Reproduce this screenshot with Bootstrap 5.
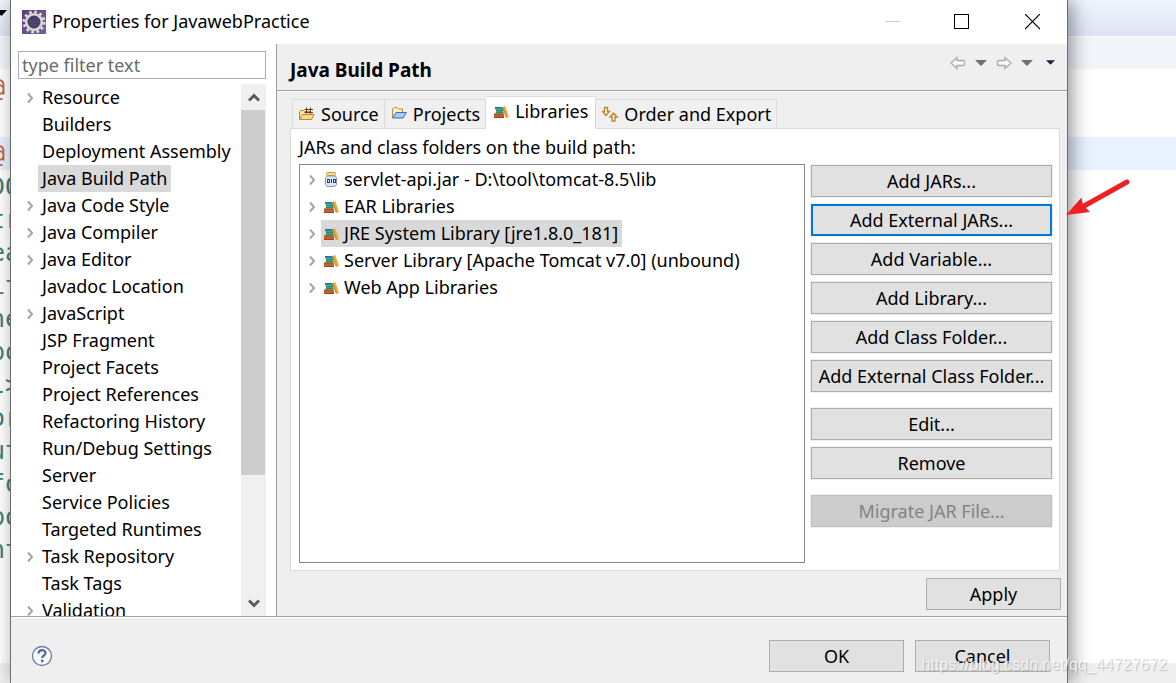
<!DOCTYPE html>
<html lang="en">
<head>
<meta charset="utf-8">
<meta name="viewport" content="width=device-width, initial-scale=1">
<title>Properties for JavawebPractice</title>
<link href="https://cdn.jsdelivr.net/npm/bootstrap@5.3.0/dist/css/bootstrap.min.css" rel="stylesheet">
<style>
  body { font-family: "Noto Sans", "Open Sans", sans-serif; font-size: 18px; line-height: 27px; color: #000; background: #fff; }
  button { font: inherit; color: inherit; }
  svg { display: block; flex: none; }
  .desktop { height: 100vh; grid-template: minmax(0, 1fr) / minmax(0, 1fr); }
  .desktop > * { grid-area: 1 / 1; }

  /* editor behind the dialog */
  .ide-toolbar { height: 36px; background: linear-gradient(#f1f4fd, #dde3f4); }
  .ide-tabs { height: 32px; margin-top: 1px; background: #f4f5fb; }
  .code { padding-top: 2px; font: 25px/33px "DejaVu Sans Mono", monospace; color: #3f8080; white-space: pre; }
  .code div { height: 33px; text-indent: -10px; }
  .code .attr { color: #c8603c; }
  .code .current { background: #e8f1fe; }
  .ide-status { height: 20px; background: #efefef; }

  /* dialog frame */
  .dialog { margin: 0 108px 0 10px; background: #efefef; border: solid #6d6d6d; border-width: 0 1px; box-shadow: 4px 0 18px rgba(0, 0, 0, .42); }
  .titlebar { height: 44px; padding-left: 11px; background: #fff; }
  .titlebar span { padding: 0 0 2px 6px; }
  .win-btn { width: 70px; height: 44px; border: 0; background: none; padding: 0; }

  /* category side */
  .side { width: 266px; background: #fff; border-right: 1px solid #a0a0a0; padding: 7px 10px 0 7px; }
  .filter { height: 28px; border: 1px solid #abadb3; border-radius: 0; padding: 0 3px; font-size: 18px; color: #000; }
  .filter::placeholder { color: #6a6a6a; opacity: 1; }
  .tree { margin-top: 5px; }
  .tree ul { min-width: 0; }
  .tree-row { height: 27px; white-space: nowrap; }
  .twisty { width: 6px; height: 12px; margin: 1px 5px 0 9px; visibility: hidden; }
  .twisty.open-able { visibility: visible; }
  .tree-label { padding: 0 4px; }
  .picked { background: #d9d9d9; }
  .scroll { width: 25px; background: #f0f0f0; }
  .scroll button { height: 26px; border: 0; padding: 0; background: none; }
  .thumb { flex: 0 0 76%; width: 24px; background: #cdcdcd; }

  /* page side */
  .page-head { height: 47px; padding: 0 12px 0 13px; border-bottom: 1px solid #a0a0a0; box-shadow: 0 1px #fff; }
  .page-head h1 { font-size: 19px; line-height: 27px; padding-top: 6px; }
  .tool { border: 0; background: none; padding: 0; }
  .page-tools { gap: 9px; padding-bottom: 9px; }
  .page-body { padding: 5px 6px 6px 13px; }
  .tabs { padding-left: 2px; height: 32px; }
  .tab-btn { height: 29px; border: 1px solid #dcdcdc; border-width: 1px 1px 0 0; background: #f0f0f0; padding: 0 5px 0 6px; gap: 6px; white-space: nowrap; }
  .tab-btn:first-child { border-left-width: 1px; }
  .tab-btn.active { height: 33px; margin-bottom: -1px; padding: 0 7px 3px; background: #fff; position: relative; }
  .pane { border: 1px solid #dcdcdc; background: #fff; padding: 5px 7px 7px 8px; margin-right: 1px; }
  .pane-split { gap: 6px; margin-top: 3px; }
  .lib-list { border: 1px solid #828790; padding-top: 1px; }
  .lib-list .twisty { margin-right: 6px; }
  .lib-label { padding: 0 4px 0 2px; gap: 5px; height: 27px; }
  .actions { width: 241px; gap: 7px; padding-top: 1px; }

  .push { height: 32px; padding: 0; font-size: 18px; line-height: 28px; color: #000; background: #e1e1e1; border: 1px solid #adadad; border-radius: 0; white-space: nowrap; box-shadow: 0 0 0 1px #f0f0f0; }
  .push.focused { border: 2px solid #0078d7; }
  .push:disabled { opacity: 1; color: #838383; background: #ccc; border-color: #bfbfbf; }
  .gap-above { margin-top: 9px; }
  .wide { width: 135px; }
  .apply-row { padding-top: 7px; }
  .footer-bar { height: 67px; border-top: 1px solid #a0a0a0; box-shadow: inset 0 1px #fff; padding: 11px 17px 0 20px; gap: 11px; }

  /* overlays */
  .pointer { right: 46px; top: 178px; }
  .watermark { right: 9px; bottom: 6px; font: 16px/24px "Liberation Sans", sans-serif; color: rgba(255, 255, 255, .75); text-shadow: 1px 1px 1px rgba(0, 0, 0, .22); }
</style>
</head>
<body>
<svg width="0" height="0" class="position-absolute" aria-hidden="true">
  <symbol id="i-chev" viewBox="0 0 6 12"><path d="M1 1.500L5 6L1 10.500" fill="none" stroke="#a6a6a6" stroke-width="2"/></symbol>
  <symbol id="i-books" viewBox="0 0 16 16">
    <path d="M2 3h7l1 1v1.500H2z" fill="#2b8fc0"/><path d="M2 3.500h6.500" stroke="#1c6f9e"/>
    <path d="M3 6h7.500v3H3z" fill="#46a67a"/><path d="M3 6h7.500M2.500 9h8" stroke="#17784e"/>
    <path d="M1 10h10v3.500H1z" fill="#c4622f"/><path d="M1 10h9.500M1 13.500h10" stroke="#98461d"/>
    <path d="M9.500 3l2.700-1L16 13l-2.800.8z" fill="#f0a63a"/><path d="M9.800 3L13.300 13.500" stroke="#c77f1d" fill="none"/>
  </symbol>
  <symbol id="i-jar" viewBox="0 0 16 16">
    <rect x="3.500" y=".5" width="9" height="3" rx="1" fill="#f6dd8a" stroke="#c8973a"/>
    <path d="M4 4h8l1.500 2v6.500L12 14.500H4l-1.500-2V6z" fill="#dce8f8" stroke="#8197b8"/>
    <rect x="4.500" y="7.500" width="2" height="3" fill="none" stroke="#27406e"/><path d="M8.500 7v4" stroke="#27406e"/><rect x="10.500" y="7.500" width="2" height="3" fill="none" stroke="#27406e"/>
  </symbol>
  <symbol id="i-source" viewBox="0 0 16 16">
    <path d="M.5 13.500V5.500l1-1h3l1 1h6v8z" fill="#f9e3ac" stroke="#bd8433"/>
    <path d="M.5 13.500l3-5h11.500l-2.500 5z" fill="#fbd88a" stroke="#bd8433"/>
    <path d="M5.500 3.500H14M5.500 6.500H14M7.500 1.500v6M11.500 1.500v6" stroke="#6b3a22" fill="none"/>
  </symbol>
  <symbol id="i-project" viewBox="0 0 16 16">
    <path d="M1.500 11.500V3L3 1.500h3L7.500 3h4v4" fill="#faefc4" stroke="#b8913f"/>
    <path d="M1.500 12l3.500-5.500h10.500L12 12z" fill="#a9cdf2" stroke="#3d6cb0"/>
  </symbol>
  <symbol id="i-order" viewBox="0 0 16 16">
    <path d="M2.500 1.500h3v4h2L4 9.500.5 5.500h2z" fill="#fdf0c2" stroke="#b8862f" stroke-width="1.300"/>
    <path d="M10 15h3v-4h2.200L11.500 7 8 11h2z" fill="#fdf0c2" stroke="#b8862f" stroke-width="1.300"/>
  </symbol>
  <symbol id="i-down" viewBox="0 0 12 6"><path d="M0 0h12L6 6z"/></symbol>
</svg>

<div class="desktop d-grid position-relative overflow-hidden">
  <div class="d-flex flex-column overflow-hidden" aria-hidden="true">
    <div class="ide-toolbar"><svg width="8" height="20" viewBox="0 0 8 20"><path d="M-4 10H7L1.500 16z"/></svg></div>
    <div class="ide-tabs"></div>
    <div class="code flex-grow-1 overflow-hidden"><div class="attr">@</div><div></div><div class="attr current">@</div><div>DOC</div><div>tr</div><div>ea</div><div>it</div><div>ne</div><div>po</div><div>l&gt;</div><div>or</div><div>ut</div><div>fo</div><div>po</div><div>nt</div></div>
    <div class="ide-status"></div>
  </div>

  <main class="dialog d-flex flex-column position-relative">
    <header class="titlebar d-flex align-items-center">
      <svg width="24" height="24" viewBox="0 0 24 24" aria-hidden="true">
        <defs><linearGradient id="purple" x2="1" y2="1"><stop stop-color="#5b3f7e"/><stop offset="1" stop-color="#7460a4"/></linearGradient></defs>
        <rect width="24" height="24" fill="url(#purple)"/>
        <circle cx="12" cy="12" r="10" fill="none" stroke="#dedcd6" stroke-width="3" stroke-dasharray="2.600 2.636"/>
        <circle cx="12" cy="12" r="7.800" fill="#453c66" stroke="#dad8d2" stroke-width="2.600"/>
        <path d="M7 10h10M6.500 12.500h11M7 15h10" stroke="#57507c"/>
      </svg>
      <span class="flex-grow-1">Properties for JavawebPractice</span>
      <button class="win-btn d-flex align-items-center justify-content-center" aria-label="Minimize" disabled><svg width="15" height="15"><path d="M0 6.500h15" stroke="#ccc"/></svg></button>
      <button class="win-btn d-flex align-items-center justify-content-center" aria-label="Maximize"><svg width="16" height="16"><rect x=".5" y=".5" width="14" height="14" fill="none" stroke="#000"/></svg></button>
      <button class="win-btn d-flex align-items-center justify-content-center" aria-label="Close"><svg width="15" height="16"><path d="M0 0l15 15M15 0L0 15" stroke="#000" stroke-width="1.200"/></svg></button>
    </header>

    <div class="d-flex flex-grow-1 overflow-hidden">
      <nav class="side d-flex flex-column flex-shrink-0" aria-label="Categories">
        <input class="filter w-100 flex-shrink-0" type="text" placeholder="type filter text" aria-label="Filter">
        <div class="tree d-flex flex-grow-1 overflow-hidden">
          <ul class="list-unstyled mb-0 flex-grow-1">
            <li class="tree-row d-flex align-items-center"><svg class="twisty open-able"><use href="#i-chev"/></svg><span class="tree-label">Resource</span></li>
            <li class="tree-row d-flex align-items-center"><svg class="twisty"></svg><span class="tree-label">Builders</span></li>
            <li class="tree-row d-flex align-items-center"><svg class="twisty"></svg><span class="tree-label">Deployment Assembly</span></li>
            <li class="tree-row d-flex align-items-center"><svg class="twisty"></svg><span class="tree-label picked">Java Build Path</span></li>
            <li class="tree-row d-flex align-items-center"><svg class="twisty open-able"><use href="#i-chev"/></svg><span class="tree-label">Java Code Style</span></li>
            <li class="tree-row d-flex align-items-center"><svg class="twisty open-able"><use href="#i-chev"/></svg><span class="tree-label">Java Compiler</span></li>
            <li class="tree-row d-flex align-items-center"><svg class="twisty open-able"><use href="#i-chev"/></svg><span class="tree-label">Java Editor</span></li>
            <li class="tree-row d-flex align-items-center"><svg class="twisty"></svg><span class="tree-label">Javadoc Location</span></li>
            <li class="tree-row d-flex align-items-center"><svg class="twisty open-able"><use href="#i-chev"/></svg><span class="tree-label">JavaScript</span></li>
            <li class="tree-row d-flex align-items-center"><svg class="twisty"></svg><span class="tree-label">JSP Fragment</span></li>
            <li class="tree-row d-flex align-items-center"><svg class="twisty"></svg><span class="tree-label">Project Facets</span></li>
            <li class="tree-row d-flex align-items-center"><svg class="twisty"></svg><span class="tree-label">Project References</span></li>
            <li class="tree-row d-flex align-items-center"><svg class="twisty"></svg><span class="tree-label">Refactoring History</span></li>
            <li class="tree-row d-flex align-items-center"><svg class="twisty"></svg><span class="tree-label">Run/Debug Settings</span></li>
            <li class="tree-row d-flex align-items-center"><svg class="twisty"></svg><span class="tree-label">Server</span></li>
            <li class="tree-row d-flex align-items-center"><svg class="twisty"></svg><span class="tree-label">Service Policies</span></li>
            <li class="tree-row d-flex align-items-center"><svg class="twisty"></svg><span class="tree-label">Targeted Runtimes</span></li>
            <li class="tree-row d-flex align-items-center"><svg class="twisty open-able"><use href="#i-chev"/></svg><span class="tree-label">Task Repository</span></li>
            <li class="tree-row d-flex align-items-center"><svg class="twisty"></svg><span class="tree-label">Task Tags</span></li>
            <li class="tree-row d-flex align-items-center"><svg class="twisty open-able"><use href="#i-chev"/></svg><span class="tree-label">Validation</span></li>
          </ul>
          <div class="scroll d-flex flex-column flex-shrink-0">
            <button class="d-flex align-items-center justify-content-center" aria-label="Scroll up"><svg width="12" height="9"><path d="M1 7.500L6 2.500l5 5" fill="none" stroke="#5a5a5a" stroke-width="3"/></svg></button>
            <div class="flex-grow-1 d-flex flex-column"><div class="thumb"></div></div>
            <button class="d-flex align-items-center justify-content-center" aria-label="Scroll down"><svg width="12" height="9"><path d="M1 1.500l5 5 5-5" fill="none" stroke="#5a5a5a" stroke-width="3"/></svg></button>
          </div>
        </div>
      </nav>

      <section class="flex-grow-1 d-flex flex-column overflow-hidden">
        <div class="page-head d-flex align-items-center flex-shrink-0">
          <h1 class="fw-bold mb-0 flex-grow-1">Java Build Path</h1>
          <div class="page-tools d-flex align-items-center">
            <button class="tool" aria-label="Back"><svg width="16" height="14"><path d="M1 7l6-5.500v3h6.500l1 1v3l-1 1H7v3z" fill="#fafafa" stroke="#aaa" stroke-width="1.300"/></svg></button>
            <button class="tool" aria-label="Back history"><svg width="12" height="6" fill="#6f7073"><use href="#i-down"/></svg></button>
            <button class="tool" aria-label="Forward"><svg width="16" height="14"><path d="M15 7L9 1.500v3H2.500l-1 1v3l1 1H9v3z" fill="#fafafa" stroke="#aaa" stroke-width="1.300"/></svg></button>
            <button class="tool" aria-label="Forward history"><svg width="12" height="6" fill="#6f7073"><use href="#i-down"/></svg></button>
            <button class="tool ms-1" aria-label="Menu"><svg width="9" height="5" viewBox="0 0 12 6" fill="#2a1a40"><path d="M0 0h12L6 6z"/></svg></button>
          </div>
        </div>

        <div class="page-body flex-grow-1 d-flex flex-column">
          <div class="tabs d-flex align-items-end" role="tablist">
            <button class="tab-btn d-flex align-items-center" role="tab"><svg width="16" height="16"><use href="#i-source"/></svg>Source</button>
            <button class="tab-btn d-flex align-items-center" role="tab"><svg width="16" height="16"><use href="#i-project"/></svg>Projects</button>
            <button class="tab-btn active d-flex align-items-center" role="tab" aria-selected="true"><svg width="16" height="16"><use href="#i-books"/></svg>Libraries</button>
            <button class="tab-btn d-flex align-items-center" role="tab"><svg width="16" height="16"><use href="#i-order"/></svg>Order and Export</button>
          </div>
          <div class="pane flex-grow-1 d-flex flex-column" role="tabpanel">
            <div id="lib-caption">JARs and class folders on the build path:</div>
            <div class="pane-split d-flex flex-grow-1">
              <ul class="lib-list list-unstyled mb-0 flex-grow-1" aria-labelledby="lib-caption">
                <li class="tree-row d-flex align-items-center"><svg class="twisty open-able"><use href="#i-chev"/></svg><span class="lib-label d-flex align-items-center"><svg width="16" height="16"><use href="#i-jar"/></svg>servlet-api.jar - D:\tool\tomcat-8.5\lib</span></li>
                <li class="tree-row d-flex align-items-center"><svg class="twisty open-able"><use href="#i-chev"/></svg><span class="lib-label d-flex align-items-center"><svg width="16" height="16"><use href="#i-books"/></svg>EAR Libraries</span></li>
                <li class="tree-row d-flex align-items-center"><svg class="twisty open-able"><use href="#i-chev"/></svg><span class="lib-label picked d-flex align-items-center"><svg width="16" height="16"><use href="#i-books"/></svg>JRE System Library [jre1.8.0_181]</span></li>
                <li class="tree-row d-flex align-items-center"><svg class="twisty open-able"><use href="#i-chev"/></svg><span class="lib-label d-flex align-items-center"><svg width="16" height="16"><use href="#i-books"/></svg>Server Library [Apache Tomcat v7.0] (unbound)</span></li>
                <li class="tree-row d-flex align-items-center"><svg class="twisty open-able"><use href="#i-chev"/></svg><span class="lib-label d-flex align-items-center"><svg width="16" height="16"><use href="#i-books"/></svg>Web App Libraries</span></li>
              </ul>
              <div class="actions d-flex flex-column flex-shrink-0">
                <button class="btn push">Add JARs...</button>
                <button class="btn push focused">Add External JARs...</button>
                <button class="btn push">Add Variable...</button>
                <button class="btn push">Add Library...</button>
                <button class="btn push">Add Class Folder...</button>
                <button class="btn push">Add External Class Folder...</button>
                <button class="btn push gap-above">Edit...</button>
                <button class="btn push">Remove</button>
                <button class="btn push gap-above" disabled>Migrate JAR File...</button>
              </div>
            </div>
          </div>
          <div class="apply-row d-flex justify-content-end"><button class="btn push wide">Apply</button></div>
        </div>
      </section>
    </div>

    <footer class="footer-bar d-flex align-items-center flex-shrink-0">
      <button class="tool me-auto" aria-label="Help"><svg width="22" height="22" viewBox="0 0 22 22"><circle cx="11" cy="11" r="9.500" fill="#f6f8fc" stroke="#6d7f9e" stroke-width="1.300"/><path d="M7.500 8.500c0-4.500 7-4.500 7-.5 0 2.500-3.300 2.500-3.300 5" fill="none" stroke="#566b92" stroke-width="2.200"/><circle cx="11.200" cy="16" r="1.400" fill="#566b92"/></svg></button>
      <button class="btn push wide">OK</button>
      <button class="btn push wide">Cancel</button>
    </footer>
  </main>

  <svg class="pointer position-absolute" width="64" height="40" viewBox="0 0 64 40" aria-hidden="true"><path d="M61 4L18 28" stroke="#ee2024" stroke-width="5" stroke-linecap="round"/><path d="M0 37L15.500 19.500 17 27l7 7z" fill="#ee2024"/></svg>
  <div class="watermark position-absolute">https://blog.csdn.net/qq_44727672</div>
</div>
<script src="https://cdn.jsdelivr.net/npm/bootstrap@5.3.0/dist/js/bootstrap.bundle.min.js"></script>
</body>
</html>
